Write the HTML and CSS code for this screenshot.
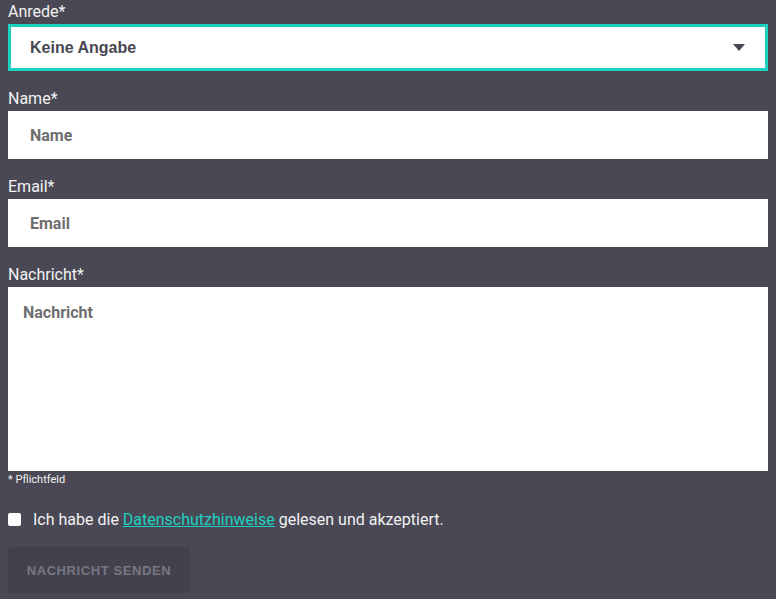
FILE: index.html
```html
<!DOCTYPE html>
<html lang="de">
<head>
<meta charset="utf-8">
<link rel="stylesheet" href="styles.css">
</head>
<body>
<form class="form">
  <label class="label">Anrede*</label>
  <div class="select">
    <span class="select-value">Keine Angabe</span>
    <svg class="caret" width="12" height="7" viewBox="0 0 12 7"><path d="M0 0h12L6 7z" fill="#484753"/></svg>
  </div>
  <label class="label">Name*</label>
  <div class="input"><span class="placeholder">Name</span></div>
  <label class="label">Email*</label>
  <div class="input"><span class="placeholder">Email</span></div>
  <label class="label">Nachricht*</label>
  <div class="textarea"><span class="placeholder">Nachricht</span></div>
  <div class="hint">* Pflichtfeld</div>
  <div class="consent">
    <span class="checkbox"></span>
    <span class="consent-text">Ich habe die <a class="link" href="#">Datenschutzhinweise</a> gelesen und akzeptiert.</span>
  </div>
  <div class="button">NACHRICHT SENDEN</div>
</form>
</body>
</html>
```
FILE: styles.css
```css
html, body {
  margin: 0;
  padding: 0;
  background: #494854;
  height: 100%;
}
body {
  font-family: Roboto, "Liberation Sans", sans-serif;
  color: #f2f2f2;
  overflow: hidden;
}
.form {
  display: flex;
  flex-direction: column;
  padding: 0 8px;
}
.label {
  font-size: 16px;
  line-height: 24px;
  height: 24px;
}
.select {
  height: 47px;
  box-sizing: border-box;
  border: 3px solid #1dd1c1;
  background: #fff;
  display: flex;
  align-items: center;
  justify-content: space-between;
  padding: 0 20px 0 19px;
  margin-bottom: 16px;
}
.select-value {
  font-family: "Liberation Sans", Arial, sans-serif;
  font-size: 16px;
  font-weight: 700;
  color: #484753;
}
.caret {
  display: block;
}
.input {
  height: 48px;
  background: #fff;
  display: flex;
  align-items: center;
  padding: 0 22px;
  margin-bottom: 16px;
}
.placeholder {
  font-size: 16px;
  font-weight: 700;
  color: #6e6e6e;
}
.textarea {
  height: 184px;
  background: #fff;
  box-sizing: border-box;
  padding: 16px 15px;
}
.hint {
  font-size: 11px;
  line-height: 18px;
  color: #f2f2f2;
}
.consent {
  display: flex;
  align-items: center;
  margin-top: 18px;
  height: 24px;
}
.checkbox {
  width: 13px;
  height: 13px;
  background: #fff;
  border-radius: 2px;
  margin-right: 12px;
}
.consent-text {
  font-size: 16px;
}
.link {
  color: #1dd1c1;
  text-decoration: underline;
}
.button {
  align-self: flex-start;
  margin-top: 16px;
  width: 182px;
  height: 46px;
  box-sizing: border-box;
  background: #42414c;
  border-radius: 4px;
  color: #787784;
  font-family: "Liberation Sans", Arial, sans-serif;
  font-size: 13px;
  font-weight: 700;
  letter-spacing: 0.6px;
  display: flex;
  align-items: center;
  justify-content: center;
}
```
